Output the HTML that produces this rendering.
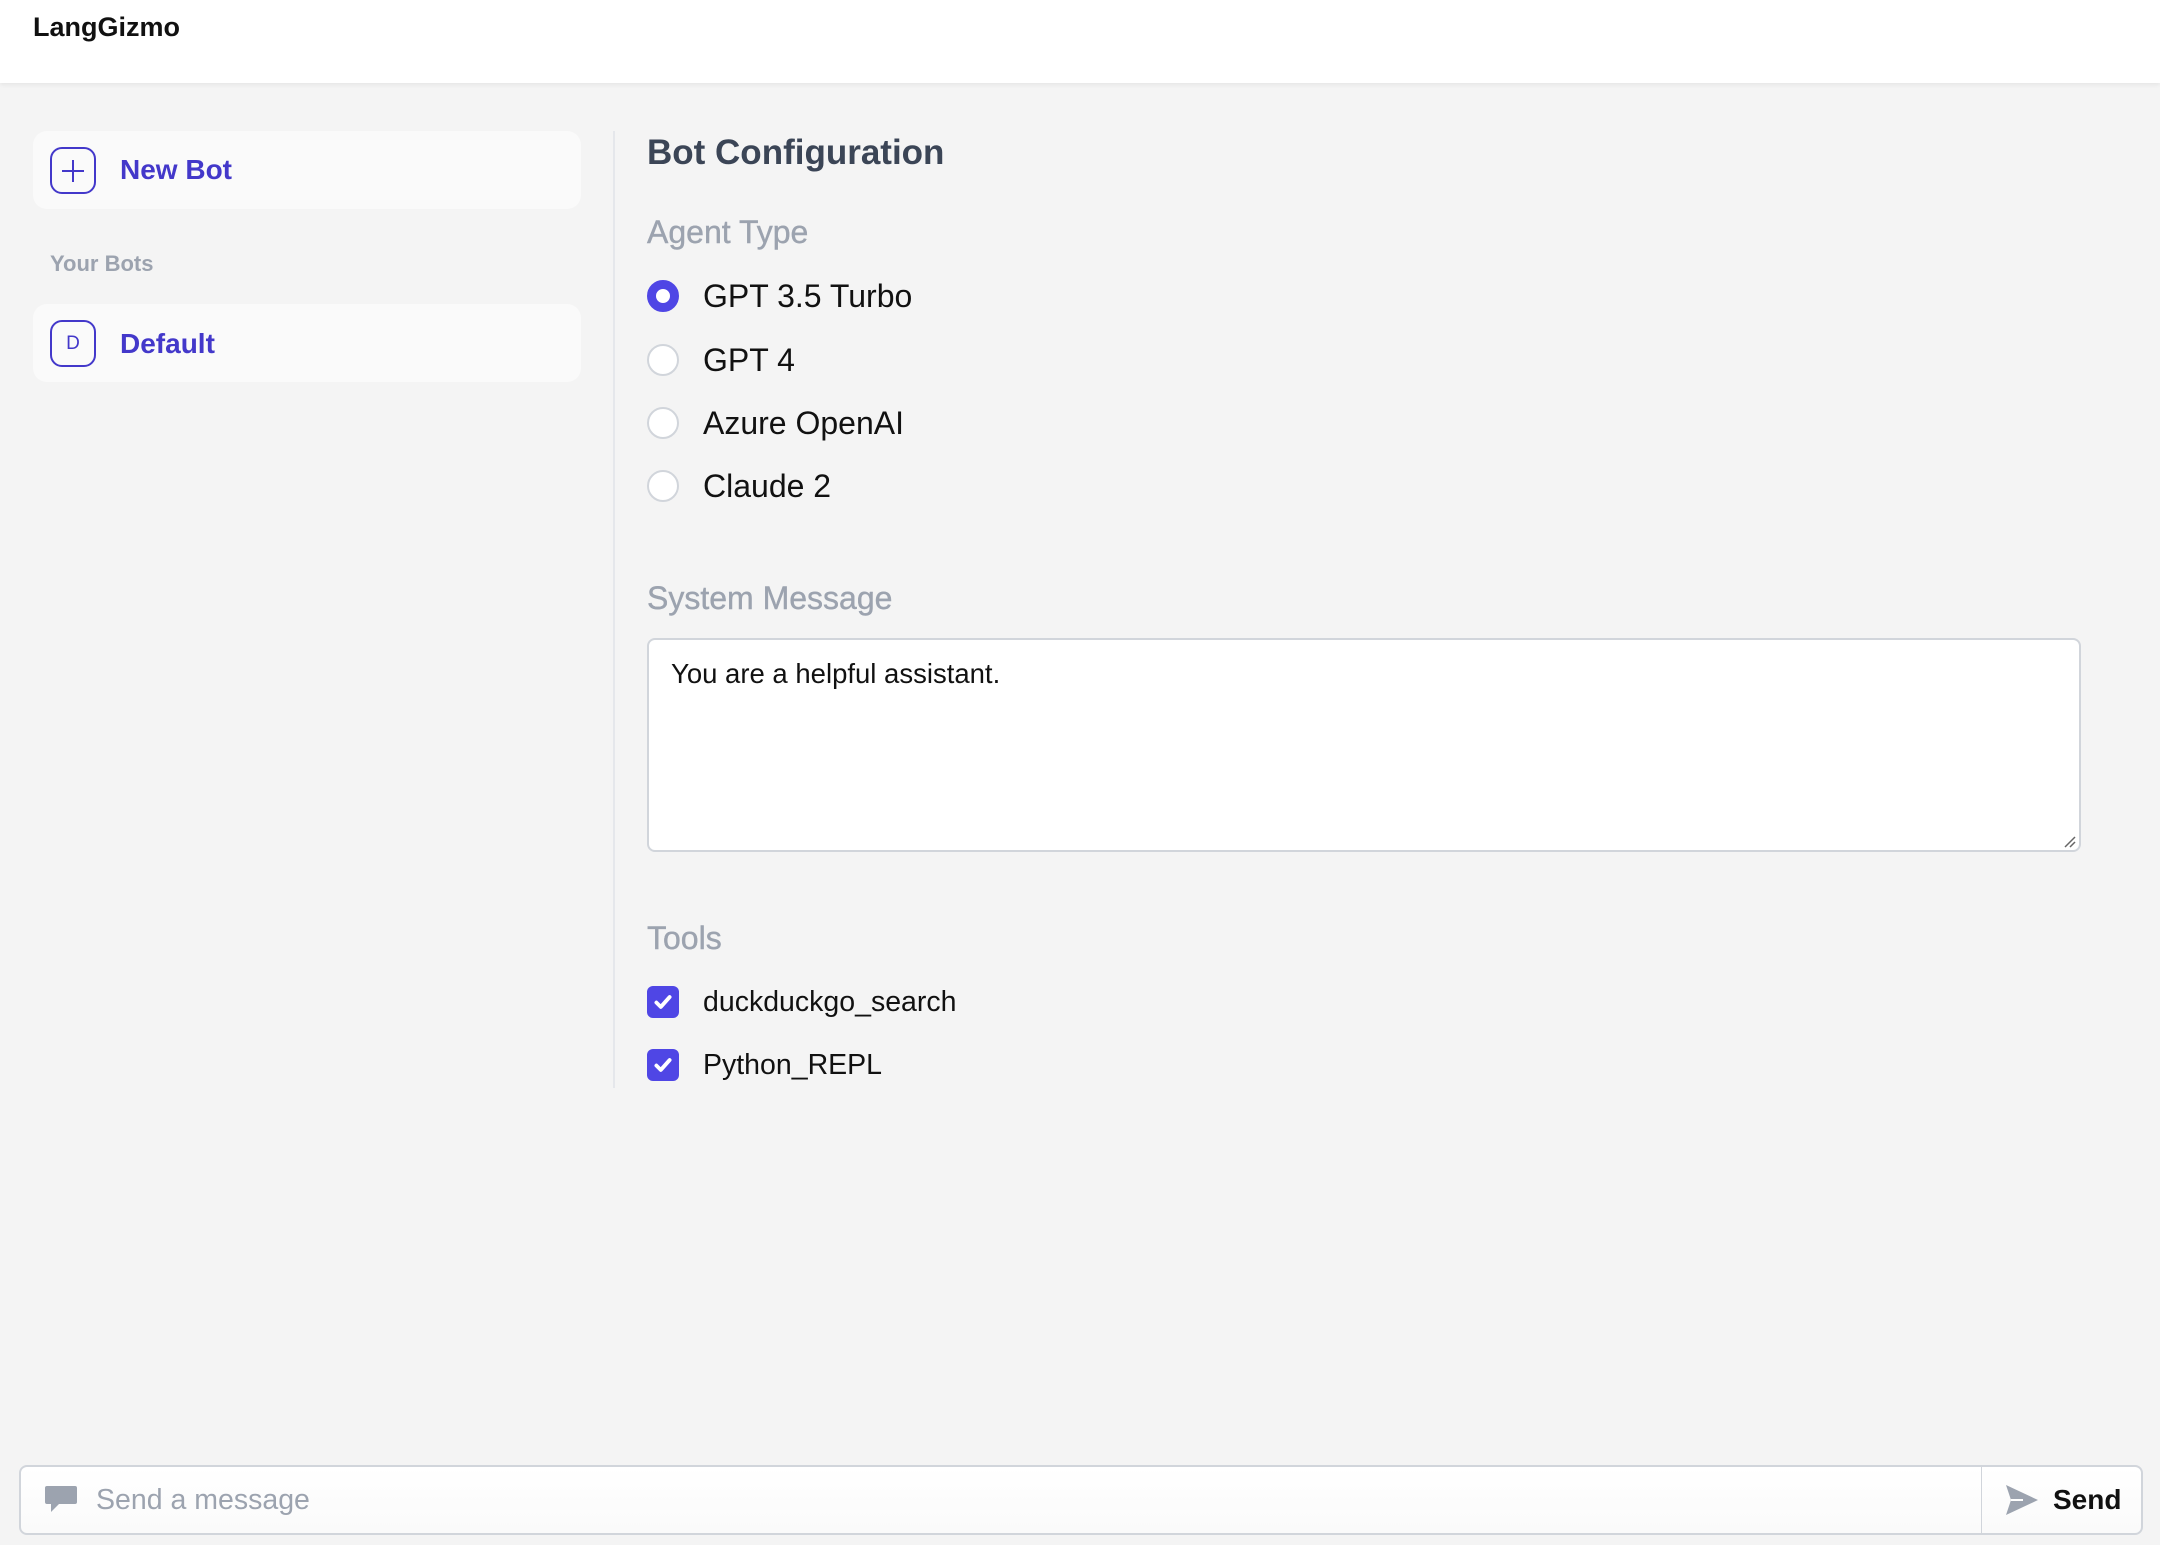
<!DOCTYPE html>
<html><head><meta charset="utf-8"><style>
*{box-sizing:border-box;margin:0;padding:0}
body{width:2160px;height:1545px;background:#f4f4f4;font-family:"Liberation Sans",sans-serif;position:relative;overflow:hidden;color:#111827}
.a{position:absolute;white-space:nowrap}
.hdr{left:0;top:0;width:2160px;height:83px;background:#fff;box-shadow:0 2px 4px rgba(0,0,0,.06)}
.card{left:33px;width:548px;height:78px;background:#fafafa;border-radius:14px}
.ib{left:50px;width:46px;height:47px;border:2px solid #4338ca;border-radius:12px;color:#4338ca;display:flex;align-items:center;justify-content:center}
.bt{left:120px;font-size:28px;font-weight:bold;color:#4338ca}
.lbl{left:647px;font-size:32px;color:#9ca3af;font-weight:500;-webkit-text-stroke:0.4px #9ca3af}
.radio{left:647px;width:32px;height:32px;border-radius:50%;border:2px solid #d1d5db;background:#fff}
.opt{left:703px;font-size:32px;color:#111}
.cb{left:647px;width:32px;height:32px;border-radius:6px;background:#4f46e5;display:flex;align-items:center;justify-content:center}
.tl{left:703px;font-size:28.5px;color:#111}
</style></head><body>
<div class="a hdr"></div>
<div class="a" style="left:33px;top:12px;font-size:27px;font-weight:bold;color:#111">LangGizmo</div>

<div class="a card" style="top:131px"></div>
<div class="a ib" style="top:147px"><svg width="26" height="26" viewBox="0 0 26 26"><path d="M13 2v22M2 13h22" stroke="#4338ca" stroke-width="2"/></svg></div>
<div class="a bt" style="top:154px">New Bot</div>
<div class="a" style="left:50px;top:251px;font-size:22px;font-weight:bold;color:#9ca3af">Your Bots</div>
<div class="a card" style="top:304px"></div>
<div class="a ib" style="top:320px;font-size:19px">D</div>
<div class="a bt" style="top:328px">Default</div>

<div class="a" style="left:613px;top:131px;width:2px;height:957px;background:#e5e7eb"></div>

<div class="a" style="left:647px;top:133px;font-size:35px;font-weight:bold;color:#3b4556">Bot Configuration</div>
<div class="a lbl" style="top:214px">Agent Type</div>
<div class="a radio" style="top:280px;border:9px solid #4f46e5"></div>
<div class="a opt" style="top:278px">GPT 3.5 Turbo</div>
<div class="a radio" style="top:344px"></div>
<div class="a opt" style="top:342px">GPT 4</div>
<div class="a radio" style="top:407px"></div>
<div class="a opt" style="top:405px">Azure OpenAI</div>
<div class="a radio" style="top:470px"></div>
<div class="a opt" style="top:468px">Claude 2</div>

<div class="a lbl" style="top:580px">System Message</div>
<div class="a" style="left:647px;top:638px;width:1434px;height:214px;background:#fff;border:2px solid #d1d5db;border-radius:8px"></div>
<div class="a" style="left:671px;top:658px;font-size:27.5px;color:#111">You are a helpful assistant.</div>
<svg class="a" style="left:2064px;top:836px" width="12" height="12"><path d="M1 11L11 1M6 11L11 6" stroke="#666" stroke-width="1.5"/></svg>

<div class="a lbl" style="top:920px">Tools</div>
<div class="a cb" style="top:986px"><svg width="22" height="22" viewBox="0 0 20 20"><path d="M4 10.5l4 4 8-9" stroke="#fff" stroke-width="3.5" fill="none" stroke-linecap="round" stroke-linejoin="round"/></svg></div>
<div class="a tl" style="top:986px">duckduckgo_search</div>
<div class="a cb" style="top:1049px"><svg width="22" height="22" viewBox="0 0 20 20"><path d="M4 10.5l4 4 8-9" stroke="#fff" stroke-width="3.5" fill="none" stroke-linecap="round" stroke-linejoin="round"/></svg></div>
<div class="a tl" style="top:1049px">Python_REPL</div>

<div class="a" style="left:19px;top:1465px;width:2124px;height:70px;background:linear-gradient(#fff,#fafafa);border:2px solid #d1d5db;border-radius:8px"></div>
<div class="a" style="left:1981px;top:1467px;width:1px;height:66px;background:#d1d5db"></div>
<svg class="a" style="left:43px;top:1482px" width="36" height="36" viewBox="0 0 36 36"><path d="M4 4h28a2 2 0 0 1 2 2v14a2 2 0 0 1-2 2H16l-8 8v-8H4a2 2 0 0 1-2-2V6a2 2 0 0 1 2-2z" fill="#9ca3af"/></svg>
<div class="a" style="left:96px;top:1484px;font-size:28.5px;color:#9ca3af">Send a message</div>
<svg class="a" style="left:2005px;top:1484px" width="34" height="32" viewBox="0 0 34 32"><path d="M1 1L33 16 1 31 6 16z" fill="#9ca3af"/><path d="M6 16h12" stroke="#fff" stroke-width="2"/></svg>
<div class="a" style="left:2053px;top:1484px;font-size:28px;font-weight:bold;color:#111">Send</div>
</body></html>
